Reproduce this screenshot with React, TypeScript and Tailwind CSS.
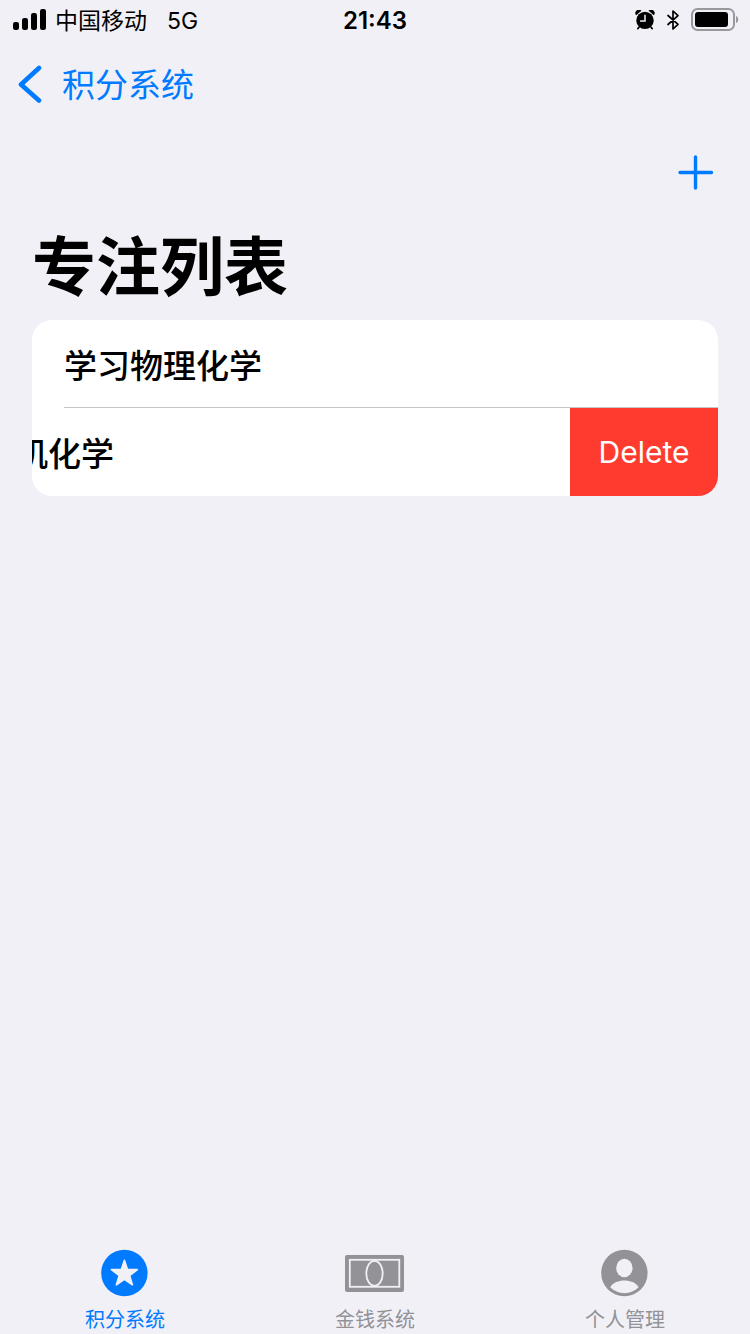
import type { ReactNode } from 'react'

const focusItems = [
  { id: 1, title: '学习物理化学', swiped: false },
  { id: 2, title: '学习有机化学', swiped: true },
]

function SignalIcon() {
  return (
    <svg width="34" height="22" viewBox="0 0 34 22" fill="currentColor" aria-hidden="true">
      <rect x="0" y="13" width="6" height="8" rx="2.2" />
      <rect x="9" y="9" width="6" height="12" rx="2.2" />
      <rect x="18" y="4" width="6" height="17" rx="2.2" />
      <rect x="27" y="0" width="6" height="21" rx="2.2" />
    </svg>
  )
}

function AlarmIcon() {
  return (
    <svg width="20" height="20" viewBox="0 0 20 20" aria-hidden="true">
      <circle cx="10" cy="10.4" r="8.7" fill="currentColor" />
      <path d="M1.2 5.2A3.4 3.4 0 0 1 6.4 0.8Z" fill="currentColor" />
      <path d="M18.8 5.2A3.4 3.4 0 0 0 13.6 0.8Z" fill="currentColor" />
      <path d="M4.4 16.8 2.8 18.6M15.6 16.8l1.6 1.8" stroke="currentColor" strokeWidth="1.6" strokeLinecap="round" />
      <path d="M10 5.2V11H5.6" fill="none" stroke="#f1f0f6" strokeWidth="1.5" strokeLinecap="round" />
    </svg>
  )
}

function BluetoothIcon() {
  return (
    <svg width="14" height="22" viewBox="0 0 14 22" fill="none" stroke="currentColor" strokeWidth="1.7" strokeLinejoin="round" strokeLinecap="round" aria-hidden="true">
      <path d="m2 6.5 10 8.8-5 4.7V2l5 4.7L2 15.5" />
    </svg>
  )
}

function BatteryIcon() {
  return (
    <svg width="48" height="24" viewBox="0 0 48 24" aria-hidden="true">
      <rect x="1" y="1" width="42" height="21" rx="5.5" fill="none" stroke="#99999c" strokeWidth="2" />
      <rect x="4" y="4" width="33" height="15" rx="3" fill="currentColor" />
      <path d="M45 8c3 1 3 6 0 7Z" fill="#99999c" />
    </svg>
  )
}

function StarIcon() {
  return (
    <svg width="48" height="48" viewBox="0 0 48 48" aria-hidden="true">
      <circle cx="23.4" cy="24" r="23.2" fill="currentColor" />
      <path
        d="M23.4 11.2 26.5 20.4 36.4 20.6 28.6 26.5 31.4 35.8 23.4 30.3 15.4 35.8 18.2 26.5 10.4 20.6 20.3 20.4Z"
        fill="#f1f0f6"
        stroke="#f1f0f6"
        strokeWidth="1.6"
        strokeLinejoin="round"
      />
    </svg>
  )
}

function MoneyIcon() {
  return (
    <svg width="60" height="48" viewBox="0 0 60 48" aria-hidden="true">
      <rect x="0" y="6" width="59" height="37" rx="2" fill="currentColor" />
      <g fill="none" stroke="#f1f0f6" strokeWidth="1.8">
        <rect x="4.8" y="10.8" width="49.5" height="27" />
        <ellipse cx="29.5" cy="24.4" rx="8.2" ry="12.6" fill="currentColor" />
      </g>
    </svg>
  )
}

function PersonIcon() {
  return (
    <svg width="48" height="48" viewBox="0 0 48 48" aria-hidden="true">
      <circle cx="23.4" cy="24" r="23.2" fill="currentColor" />
      <ellipse cx="23.4" cy="19" rx="8.2" ry="9.2" fill="#f1f0f6" />
      <path d="M9.2 38.3C12 33.6 17.4 31.6 23.4 31.6s11.5 2 14.2 6.7C34 42 29 44.2 23.4 44.2S13 42 9.2 38.3Z" fill="#f1f0f6" />
    </svg>
  )
}

function StatusBar() {
  return (
    <div className="grid grid-cols-3 items-center h-10 px-3">
      <div className="flex items-center gap-2 pl-px text-[23px] leading-9 whitespace-nowrap">
        <SignalIcon />
        <span className="pt-0.5">中国移动</span>
        <span className="pt-0.5 pl-3">5G</span>
      </div>
      <div className="pt-0.5 text-center text-2xl leading-9 font-semibold">21:43</div>
      <div className="-mr-px flex items-center justify-end gap-[11px]">
        <AlarmIcon />
        <BluetoothIcon />
        <BatteryIcon />
      </div>
    </div>
  )
}

interface FocusRowProps {
  title: string
  swiped: boolean
}

function FocusRow({ title, swiped }: FocusRowProps) {
  return (
    <li className="group flex justify-end h-[88px] overflow-hidden">
      <div className="w-full shrink-0 pl-8">
        <div className="flex items-center h-full pt-1 border-b border-[#c6c6c8] group-last:border-b-0 text-[33px] leading-10 font-medium whitespace-nowrap">
          {title}
        </div>
      </div>
      {swiped && (
        <button type="button" className="w-[148px] shrink-0 bg-[#ff3b30] text-white text-[30px] leading-10">
          Delete
        </button>
      )}
    </li>
  )
}

interface TabProps {
  label: string
  icon: ReactNode
  active?: boolean
}

function Tab({ label, icon, active = false }: TabProps) {
  return (
    <a
      href="#"
      aria-current={active ? 'page' : undefined}
      className={`flex flex-1 flex-col items-center gap-[9px] text-xl leading-7 ${active ? 'text-[#007aff]' : 'text-[#929297]'}`}
    >
      {icon}
      {label}
    </a>
  )
}

export default function App() {
  return (
    <div className="flex flex-col min-h-screen overflow-hidden bg-[#f1f0f6] text-black font-[Inter,'Noto_Sans_CJK_SC',sans-serif]">
      <StatusBar />
      <nav className="flex items-center h-[88px] px-[18px]">
        <a href="#" className="flex items-center gap-5 text-[33px] leading-10 text-[#007aff]">
          <svg width="24" height="40" viewBox="0 0 24 40" fill="none" stroke="currentColor" strokeWidth="4.6" strokeLinecap="round" strokeLinejoin="round" aria-hidden="true">
            <path d="M21 4 3 20.5 21 36.5" />
          </svg>
          <span className="pt-0.5">积分系统</span>
        </a>
      </nav>
      <main className="flex-1 px-8">
        <div className="flex justify-end h-[88px] pt-[26px]">
          <button type="button" aria-label="添加" className="h-9 text-[#007aff]">
            <svg width="46" height="36" viewBox="0 0 46 36" stroke="currentColor" strokeWidth="3.4" strokeLinecap="round" aria-hidden="true">
              <path d="M8 18.5h31.5M23.5 3v31" />
            </svg>
          </button>
        </div>
        <h1 className="h-[104px] text-[64px] leading-[102px] font-bold">专注列表</h1>
        <ul className="rounded-[20px] bg-white overflow-hidden">
          {focusItems.map((item) => (
            <FocusRow key={item.id} title={item.title} swiped={item.swiped} />
          ))}
        </ul>
      </main>
      <footer className="flex">
        <Tab label="积分系统" icon={<StarIcon />} active />
        <Tab label="金钱系统" icon={<MoneyIcon />} />
        <Tab label="个人管理" icon={<PersonIcon />} />
      </footer>
    </div>
  )
}
